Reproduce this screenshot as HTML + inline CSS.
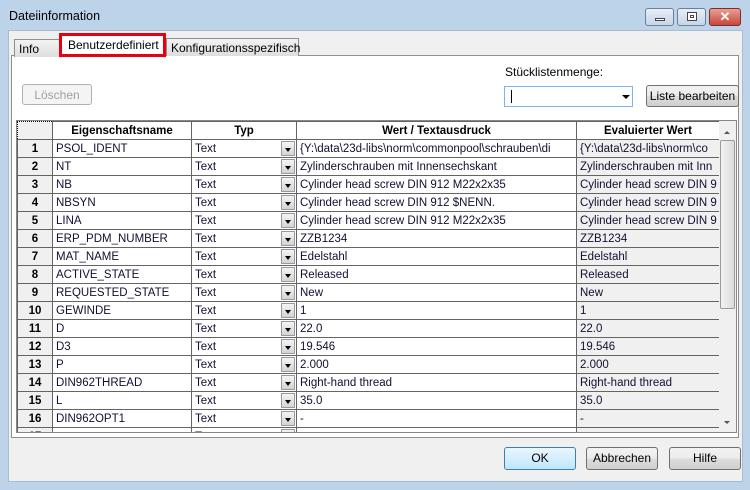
<!DOCTYPE html>
<html><head><style>
*{box-sizing:border-box;margin:0;padding:0}
body{width:750px;height:490px;background:#bcd3ea;font-family:"Liberation Sans",sans-serif;font-size:12px;color:#000;position:relative;overflow:hidden}
.abs{position:absolute}
.title{left:9px;top:9px;font-size:12.5px;color:#000}
.client{left:8px;top:30px;width:735px;height:452px;background:#f0f0f0;border:1px solid #a9bcd0}
.wb{top:8px;height:18px;border:1px solid #6d7f94;border-radius:3px;background:linear-gradient(#e6eef7,#c8d6e6)}
.tab{top:38px;height:18px;border:1px solid #8e8f8f;border-bottom:none;background:linear-gradient(#f3f3f3,#dedede);padding:2px 4px 0}
.panel{left:11px;top:55px;width:728px;height:383px;background:#fff;border:1px solid #8e8f8f}
.btn{border:1px solid #707070;border-radius:3px;background:linear-gradient(#f2f2f2 0%,#ebebeb 50%,#dddddd 51%,#cfcfcf 100%);text-align:center;line-height:20px}
table{border-collapse:collapse;table-layout:fixed}
td{border:1px solid #646464;height:18px;padding:0 3px;white-space:nowrap;overflow:hidden;font-size:11.5px;color:#101030}
th{border:1px solid #646464;height:18px;font-weight:bold;font-size:11.5px;background:#fff}
td.rh{background:#f0f0f0;font-weight:bold;text-align:center;color:#000}
td.ev{background:#f0f0f0}
td.ty{position:relative}
.dd{position:absolute;right:1px;top:1px;width:14px;height:15px;background:linear-gradient(#f4f4f4,#d4d4d4);border:1px solid #9a9a9a}
.dd:after{content:"";position:absolute;left:3px;top:6px;border:3px solid transparent;border-top:4px solid #000}
</style></head><body>
<div class="abs title">Dateiinformation</div>
<div class="abs wb" style="left:645px;width:29px"><div class="abs" style="left:9px;top:9px;width:10px;height:3px;background:#fff;border:1px solid #445"></div></div>
<div class="abs wb" style="left:677px;width:29px"><div class="abs" style="left:9px;top:3px;width:10px;height:9px;border:1px solid #445;background:#fff"><div style="margin:2px;height:3px;border:1px solid #445"></div></div></div>
<div class="abs wb" style="left:709px;width:32px;background:linear-gradient(#e8a093,#c8473a);border-color:#7a302a;color:#fff;font-weight:bold;text-align:center;line-height:16px;font-size:13px">✕</div>
<div class="abs client"></div>
<div class="abs panel"></div>
<div class="abs tab" style="left:14px;top:39px;width:46px">Info</div>
<div class="abs tab" style="left:166px;top:38px;width:133px">Konfigurationsspezifisch</div>
<div class="abs" style="left:59px;top:33px;width:107px;height:24px;background:#fff;border:3px solid #e8000e;padding:2px 0 0 6px">Benutzerdefiniert</div>
<div class="abs btn" style="left:22px;top:84px;width:70px;height:21px;color:#a0a0a0;border-color:#adb2b5;background:#f4f4f4">Löschen</div>
<div class="abs" style="left:505px;top:65px">Stücklistenmenge:</div>
<div class="abs" style="left:504px;top:86px;width:129px;height:21px;background:#fff;border:1px solid #7eb4ea"><div class="abs" style="left:6px;top:3px;width:1px;height:13px;background:#000"></div><div class="abs" style="left:117px;top:8px;border:4px solid transparent;border-top:4px solid #000"></div></div>
<div class="abs btn" style="left:646px;top:85px;width:93px;height:22px">Liste bearbeiten</div>
<div class="abs" style="left:16px;top:120px;width:721px;height:313px;border:1px solid #828790;background:#fff;overflow:hidden">
<table style="width:702px">
<colgroup><col style="width:35px"><col style="width:139px"><col style="width:105px"><col style="width:280px"><col style="width:143px"></colgroup>
<tr><th style="border:1px dotted #000;background:#f0f0f0"></th><th>Eigenschaftsname</th><th>Typ</th><th>Wert / Textausdruck</th><th>Evaluierter Wert</th></tr>
<tr><td class="rh">1</td><td>PSOL_IDENT</td><td class="ty">Text<span class="dd"></span></td><td>{Y:\data\23d-libs\norm\commonpool\schrauben\di</td><td class="ev">{Y:\data\23d-libs\norm\co</td></tr>
<tr><td class="rh">2</td><td>NT</td><td class="ty">Text<span class="dd"></span></td><td>Zylinderschrauben mit Innensechskant</td><td class="ev">Zylinderschrauben mit Inn</td></tr>
<tr><td class="rh">3</td><td>NB</td><td class="ty">Text<span class="dd"></span></td><td>Cylinder head screw DIN 912 M22x2x35</td><td class="ev">Cylinder head screw DIN 9</td></tr>
<tr><td class="rh">4</td><td>NBSYN</td><td class="ty">Text<span class="dd"></span></td><td>Cylinder head screw DIN 912 $NENN.</td><td class="ev">Cylinder head screw DIN 9</td></tr>
<tr><td class="rh">5</td><td>LINA</td><td class="ty">Text<span class="dd"></span></td><td>Cylinder head screw DIN 912 M22x2x35</td><td class="ev">Cylinder head screw DIN 9</td></tr>
<tr><td class="rh">6</td><td>ERP_PDM_NUMBER</td><td class="ty">Text<span class="dd"></span></td><td>ZZB1234</td><td class="ev">ZZB1234</td></tr>
<tr><td class="rh">7</td><td>MAT_NAME</td><td class="ty">Text<span class="dd"></span></td><td>Edelstahl</td><td class="ev">Edelstahl</td></tr>
<tr><td class="rh">8</td><td>ACTIVE_STATE</td><td class="ty">Text<span class="dd"></span></td><td>Released</td><td class="ev">Released</td></tr>
<tr><td class="rh">9</td><td>REQUESTED_STATE</td><td class="ty">Text<span class="dd"></span></td><td>New</td><td class="ev">New</td></tr>
<tr><td class="rh">10</td><td>GEWINDE</td><td class="ty">Text<span class="dd"></span></td><td>1</td><td class="ev">1</td></tr>
<tr><td class="rh">11</td><td>D</td><td class="ty">Text<span class="dd"></span></td><td>22.0</td><td class="ev">22.0</td></tr>
<tr><td class="rh">12</td><td>D3</td><td class="ty">Text<span class="dd"></span></td><td>19.546</td><td class="ev">19.546</td></tr>
<tr><td class="rh">13</td><td>P</td><td class="ty">Text<span class="dd"></span></td><td>2.000</td><td class="ev">2.000</td></tr>
<tr><td class="rh">14</td><td>DIN962THREAD</td><td class="ty">Text<span class="dd"></span></td><td>Right-hand thread</td><td class="ev">Right-hand thread</td></tr>
<tr><td class="rh">15</td><td>L</td><td class="ty">Text<span class="dd"></span></td><td>35.0</td><td class="ev">35.0</td></tr>
<tr><td class="rh">16</td><td>DIN962OPT1</td><td class="ty">Text<span class="dd"></span></td><td>-</td><td class="ev">-</td></tr>
<tr><td class="rh">17</td><td></td><td class="ty">Text<span class="dd"></span></td><td></td><td class="ev"></td></tr>
</table>
<div class="abs" style="left:702px;top:0;width:17px;height:311px;background:#f0f0f0">
<div class="abs" style="left:5px;top:7px;border:3px solid transparent;border-bottom:3px solid #555"></div>
<div class="abs" style="left:1px;top:19px;width:15px;height:169px;border:1px solid #9a9a9a;border-radius:2px;background:linear-gradient(90deg,#f2f2f2,#dcdcdc)"></div>
<div class="abs" style="left:5px;top:300px;border:3px solid transparent;border-top:3px solid #555"></div>
</div>
</div>
<div class="abs btn" style="left:504px;top:447px;width:72px;height:23px;border-color:#3c7fb1;background:linear-gradient(#eaf6fd,#bee6fd)">OK</div>
<div class="abs btn" style="left:586px;top:447px;width:72px;height:23px">Abbrechen</div>
<div class="abs btn" style="left:669px;top:447px;width:72px;height:23px">Hilfe</div>
</body></html>
